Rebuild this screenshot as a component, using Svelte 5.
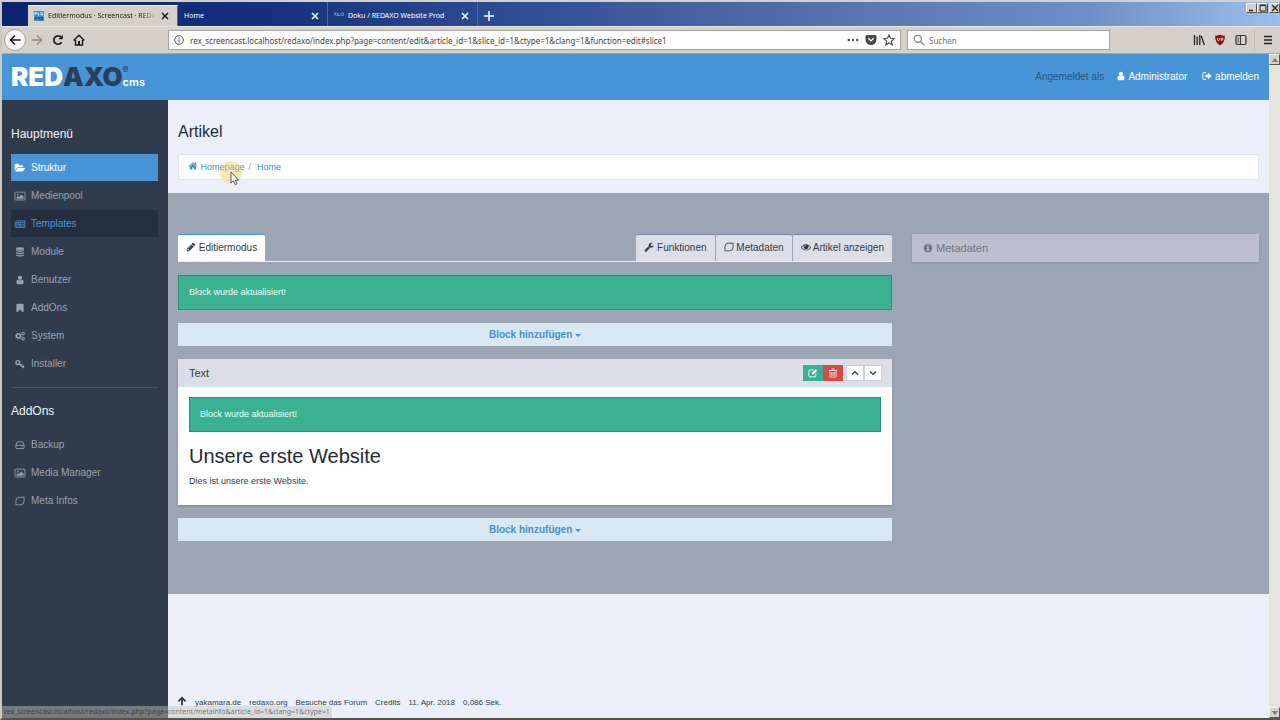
<script lang="ts">
  type MenuItem = {
    label: string;
    icon: string;
    state?: string;
  };

  const mainMenu: MenuItem[] = [
    { label: 'Struktur', icon: 'folder', state: 'active' },
    { label: 'Medienpool', icon: 'image' },
    { label: 'Templates', icon: 'newspaper', state: 'hovered' },
    { label: 'Module', icon: 'database' },
    { label: 'Benutzer', icon: 'user' },
    { label: 'AddOns', icon: 'bookmark' },
    { label: 'System', icon: 'cogs' },
    { label: 'Installer', icon: 'key' }
  ];

  const addonMenu: MenuItem[] = [
    { label: 'Backup', icon: 'hdd' },
    { label: 'Media Manager', icon: 'image' },
    { label: 'Meta Infos', icon: 'leaf' }
  ];

  const functionTabs: MenuItem[] = [
    { label: 'Funktionen', icon: 'wrench' },
    { label: 'Metadaten', icon: 'leaf' },
    { label: 'Artikel anzeigen', icon: 'eye' }
  ];

  const footerLinks = ['yakamara.de', 'redaxo.org', 'Besuche das Forum', 'Credits'];

  // Filled glyphs on a 1792 unit grid
  const glyphs: Record<string, string> = {
    folder: 'M1815 952q0 31-31 66l-336 396q-43 51-120.5 86.5t-143.5 35.5h-1088q-34 0-60.5-13t-26.5-43q0-31 31-66l336-396q43-51 120.5-86.5t143.5-35.5h1088q34 0 60.5 13t26.5 43zm-343-344v160h-832q-94 0-197 47.5t-164 119.5l-337 396-5 6q0-4-.5-12.5t-.5-12.5v-960q0-92 66-158t158-66h320q92 0 158 66t66 158v32h544q92 0 158 66t66 158z',
    home: 'M1472 992v480q0 26-19 45t-45 19h-384v-384h-256v384h-384q-26 0-45-19t-19-45v-480q0-1 .5-3t.5-3l575-474 575 474q1 2 1 6zm223-69l-62 74q-8 9-21 11h-3q-13 0-21-7l-692-577-692 577q-12 8-24 7-13-2-21-11l-62-74q-8-10-7-23.5t11-21.5l719-599q32-26 76-26t76 26l244 204v-195q0-14 9-23t23-9h192q14 0 23 9t9 23v408l219 182q10 8 11 21.5t-7 23.5z',
    user: 'M1536 1399q0 109-62.5 187t-150.5 78h-854q-88 0-150.5-78t-62.5-187q0-85 8.5-160.5t31.5-152 58.5-131 94-89 134.5-34.5q131 128 313 128t313-128q76 0 134.5 34.5t94 89 58.5 131 31.5 152 8.5 160.5zm-256-887q0 159-112.5 271.5t-271.5 112.5-271.5-112.5-112.5-271.5 112.5-271.5 271.5-112.5 271.5 112.5 112.5 271.5z',
    bookmark: 'M1420 128q23 0 44 9 33 13 52.5 41t19.5 62v1289q0 34-19.5 62t-52.5 41q-19 8-44 8-48 0-83-32l-441-424-441 424q-36 33-83 33-23 0-44-9-33-13-52.5-41t-19.5-62v-1289q0-34 19.5-62t52.5-41q21-9 44-9h1048z',
    pencil: 'M491 1536l91-91-235-235-91 91v107h128v128h107zm523-928q0-22-22-22-10 0-17 7l-542 542q-7 7-7 17 0 22 22 22 10 0 17-7l542-542q7-7 7-17zm-54-192l416 416-832 832h-416v-416zm683 96q0 53-37 90l-166 166-416-416 166-165q36-38 90-38 53 0 91 38l235 234q37 39 37 91z',
    info: 'M1152 1376v-160q0-14-9-23t-23-9h-96v-512q0-14-9-23t-23-9h-320q-14 0-23 9t-9 23v160q0 14 9 23t23 9h96v320h-96q-14 0-23 9t-9 23v160q0 14 9 23t23 9h448q14 0 23-9t9-23zm-128-896v-160q0-14-9-23t-23-9h-192q-14 0-23 9t-9 23v160q0 14 9 23t23 9h192q14 0 23-9t9-23zm640 416q0 209-103 385.5t-279.5 279.5-385.5 103-385.5-103-279.5-279.5-103-385.5 103-385.5 279.5-279.5 385.5-103 385.5 103 279.5 279.5 103 385.5z',
    eye: 'M1664 960q-152-236-381-353 61 104 61 225 0 185-131.5 316.5t-316.5 131.5-316.5-131.5-131.5-316.5q0-121 61-225-229 117-381 353 133 205 333.5 326.5t434.5 121.5 434.5-121.5 333.5-326.5zm-720-384q0-20-14-34t-34-14q-125 0-214.5 89.5t-89.5 214.5q0 20 14 34t34 14 34-14 14-34q0-86 61-147t147-61q20 0 34-14t14-34zm848 384q0 34-20 69-140 230-376.5 368.5t-499.5 138.5-499.5-139-376.5-368q-20-35-20-69t20-69q140-229 376.5-368t499.5-139 499.5 139 376.5 368q20 35 20 69z',
    wrench: 'M448 1472q0-26-19-45t-45-19-45 19-19 45 19 45 45 19 45-19 19-45zm644-420l-682 682q-37 37-90 37-52 0-91-37l-106-108q-38-36-38-90 0-53 38-91l681-681q39 98 114.5 173.5t173.5 114.5zm634-435q0 39-23 106-47 134-164.5 217.5t-258.5 83.5q-185 0-316.5-131.5t-131.5-316.5 131.5-316.5 316.5-131.5q58 0 121.5 16.5t107.5 46.5q16 11 16 28t-16 28l-293 169v224l193 107q5-3 79-48.5t135.5-81 70.5-35.5q15 0 23.5 10t8.5 25z'
  };

  let address = 'rex_screencast.localhost/redaxo/index.php?page=content/edit&article_id=1&slice_id=1&ctype=1&clang=1&function=edit#slice1';
  let search = '';
</script>

{#snippet icon(name: string)}
  {#if glyphs[name]}
    <svg class="icon" viewBox="0 0 1792 1792" aria-hidden="true"><path fill="currentColor" d={glyphs[name]} /></svg>
  {:else}
    <svg class="icon" viewBox="0 0 14 14" fill="none" stroke="currentColor" stroke-width="1.2" aria-hidden="true">
      {#if name === 'image'}
        <rect x="0" y="1.6" width="14" height="11" rx="1" />
        <circle cx="3.8" cy="5" r="1.3" fill="currentColor" stroke="none" />
        <path d="M2 11V9l2-2 1.500 1.500L9 5l3 3v3z" fill="currentColor" stroke="none" />
      {:else if name === 'newspaper'}
        <path d="M2.600 2.600h11v9.200H1.400Q.4 11.800.4 10.600V4h2.200v6.500q0 1.300-1.100 1.300" />
        <path d="M4.600 4.800h3.600v3H4.600z" />
        <path d="M9.500 5h2.800M9.500 7.500h2.800M4.200 9.800h8.100" />
      {:else if name === 'database'}
        <g fill="currentColor" stroke="none">
          <ellipse cx="7" cy="2.200" rx="5.600" ry="2" />
          <path d="M1.400 3.600q5.600 2.400 11.200 0v1.800q-5.600 3-11.200 0zM1.400 7q5.600 2.400 11.200 0v1.800q-5.600 3-11.200 0zM1.400 10.400q5.600 2.400 11.200 0V12q-5.600 3-11.200 0z" />
        </g>
      {:else if name === 'cogs'}
        <circle cx="4.800" cy="7" r="2.700" stroke-width="2" />
        <circle cx="4.800" cy="7" r="4" stroke-dasharray="1.600 1.540" stroke-width="1.500" />
        <circle cx="11.500" cy="3.500" r="1.500" stroke-width="1.400" />
        <circle cx="11.500" cy="3.500" r="2.300" stroke-dasharray="1 .8" />
        <circle cx="11.500" cy="10.700" r="1.500" stroke-width="1.400" />
        <circle cx="11.500" cy="10.700" r="2.300" stroke-dasharray="1 .8" />
      {:else if name === 'key'}
        <circle cx="4" cy="5" r="2.700" stroke-width="2" />
        <path d="M6 7l6.500 5.500M8.500 9.200l1.700-2M11 11.200l1.700-2" stroke-width="1.800" />
      {:else if name === 'hdd'}
        <path d="M1.200 7.500L3 3q.2-.6 1-.6h6q.8 0 1 .6l1.800 4.500v3.600q0 .8-.8.8H2q-.8 0-.8-.8zM1.200 7.500h11.600" />
        <path d="M8 9.700h1.200M10.300 9.700h1.200" />
      {:else if name === 'leaf'}
        <path d="M1.300 12.300V6.800Q1.300 1.700 6.200 1.700h6.500v5.500q0 5.100-5 5.100z" />
      {:else if name === 'edit'}
        <path d="M11 8v3q0 1.300-1.300 1.300H2.600Q1.300 12.300 1.300 11V4q0-1.300 1.300-1.300H8" />
        <path d="M5.500 9l.3-2.300 5-5 2 2-5 5z" fill="currentColor" stroke="none" />
      {:else if name === 'trash'}
        <path d="M1.500 3.500h11M5 3l.6-1.700h2.800L9 3M2.800 3.800v8q0 1 1 1h6.400q1 0 1-1v-8M5.200 5.800v5M7 5.800v5M8.800 5.800v5" />
      {:else if name === 'up'}
        <path d="M3 9l4-4 4 4" stroke-width="1.800" />
      {:else if name === 'down'}
        <path d="M3 5l4 4 4-4" stroke-width="1.800" />
      {:else if name === 'signout'}
        <path d="M5.500 2.200H2.800q-1.600 0-1.600 1.600v6.400q0 1.600 1.600 1.600h2.700" stroke-width="1.400" />
        <path d="M4.500 5.200h3.700V2.200L13.500 7l-5.300 4.800v-3H4.500z" fill="currentColor" stroke="none" />
      {:else if name === 'arrowup'}
        <path d="M7 13V3M2 7.500l5-5 5 5" stroke-width="2.600" />
      {/if}
    </svg>
  {/if}
{/snippet}

{#snippet menu(items: MenuItem[])}
  <ul class="menu">
    {#each items as item}
      <li>
        <a href="#{item.label}" class="menu-link {item.state ?? ''}">{@render icon(item.icon)}{item.label}</a>
      </li>
    {/each}
  </ul>
{/snippet}

{#snippet closeIcon()}
  <svg width="8" height="8" viewBox="0 0 8 8" stroke="currentColor" stroke-width="1.500"><path d="M1 1l6 6M7 1L1 7" /></svg>
{/snippet}

<div class="window">
  <div class="titlebar">
    <div class="tab current">
      <svg class="favicon" width="10" height="10" viewBox="0 0 10 10">
        <rect width="10" height="10" fill="#3d8fce" />
        <path d="M1 4V1.500h1.500v1H1M4 1.500v2.500h1.500M4 2.700h1M7 1.500v2.500h1.500V2z" stroke="#fff" stroke-width=".7" fill="none" />
        <path d="M1 8.500L2 6l1 2.500M4 6l2 2.500M6 6L4 8.500M7 6v2.500h1.500V6z" stroke="#23405f" stroke-width=".8" fill="none" />
      </svg>
      <span class="tab-title faded">Editiermodus · Screencast · REDAX</span>
      <button class="tab-close" aria-label="Tab schließen">{@render closeIcon()}</button>
    </div>
    <div class="tab">
      <span class="tab-title">Home</span>
      <button class="tab-close" aria-label="Tab schließen">{@render closeIcon()}</button>
    </div>
    <div class="tab">
      <svg class="favicon" width="10" height="10" viewBox="0 0 10 10">
        <path d="M0 4.500V2h2.500L0 3.500h1l2 1M3.500 2v2.500h2.500M3.500 3.200h2M7 2v2.500h2.500V2z" stroke="#4b9ad9" stroke-width=".9" fill="none" />
        <rect y="6" width="10" height="2" fill="#233a6b" />
      </svg>
      <span class="tab-title">Doku / REDAXO Website Prod</span>
      <button class="tab-close" aria-label="Tab schließen">{@render closeIcon()}</button>
    </div>
    <button class="new-tab" aria-label="Neuer Tab">
      <svg width="10" height="10" viewBox="0 0 10 10" stroke="#fff" stroke-width="1.500"><path d="M5 0v10M0 5h10" /></svg>
    </button>
    <div class="window-buttons">
      <button aria-label="Minimieren"><svg width="8" height="8" viewBox="0 0 8 8" stroke="#222" stroke-width="1.500"><path d="M1 6.500h4" /></svg></button>
      <button aria-label="Maximieren"><svg width="8" height="8" viewBox="0 0 8 8" fill="none" stroke="#222"><path d="M1 1.500h6v5.500H1zM1 1h6" /></svg></button>
      <button class="close" aria-label="Schließen"><svg width="8" height="8" viewBox="0 0 8 8" stroke="#222" stroke-width="1.300"><path d="M1 1l6 6M7 1L1 7" /></svg></button>
    </div>
  </div>

  <div class="toolbar">
    <button class="tool back" aria-label="Zurück">
      <svg width="12" height="12" viewBox="0 0 12 12" fill="none" stroke="#1c1c1c" stroke-width="1.600"><path d="M11.500 6H1.500M6 1.500L1.500 6 6 10.500" /></svg>
    </button>
    <button class="tool" aria-label="Vor">
      <svg width="12" height="12" viewBox="0 0 12 12" fill="none" stroke="#8d8b85" stroke-width="1.400"><path d="M.5 6h10M6 1.500L10.500 6 6 10.500" /></svg>
    </button>
    <button class="tool" aria-label="Neu laden">
      <svg width="12" height="12" viewBox="0 0 12 12" fill="none" stroke="#1c1c1c" stroke-width="1.700"><path d="M9.600 8.200A4.200 4.200 0 1 1 9.200 3.300" /><path d="M10.800.8v4.500H6.300z" fill="#1c1c1c" stroke="none" /></svg>
    </button>
    <button class="tool" aria-label="Startseite">
      <svg width="12" height="12" viewBox="0 0 12 12" fill="none" stroke="#1c1c1c" stroke-width="1.500"><path d="M.6 6.500L6 1.300l5.400 5.200M2.500 6v5h7V6" /><path d="M5 7h2v4H5z" fill="#1c1c1c" stroke="none" /></svg>
    </button>
    <div class="address">
      <svg width="10" height="10" viewBox="0 0 10 10" fill="none" stroke="#555"><circle cx="5" cy="5" r="4.300" /><path d="M5 4.300v3.200M5 2.400v1.100" /></svg>
      <input type="text" aria-label="Adresse" bind:value={address} />
      <svg width="12" height="12" viewBox="0 0 12 12" fill="#4a4a4a"><circle cx="1.800" cy="6" r="1.200" /><circle cx="6" cy="6" r="1.200" /><circle cx="10.200" cy="6" r="1.200" /></svg>
      <svg width="12" height="12" viewBox="0 0 12 12"><path d="M1.500 1h9q1 0 1 1v3.500a5.500 5.500 0 0 1-11 0V2q0-1 1-1z" fill="#4a4a4a" /><path d="M3.300 4.300L6 6.900l2.700-2.600" fill="none" stroke="#fff" stroke-width="1.400" /></svg>
      <svg width="12" height="12" viewBox="0 0 12 12" fill="none" stroke="#4a4a4a" stroke-width="1.200"><path d="M6 1l1.500 3.300 3.600.4-2.700 2.400.8 3.600L6 8.900l-3.200 1.800.8-3.600L.9 4.700l3.600-.4z" /></svg>
    </div>
    <div class="search">
      <svg width="12" height="12" viewBox="0 0 12 12" fill="none" stroke="#777" stroke-width="1.100"><circle cx="4.800" cy="4.800" r="3.600" /><path d="M7.500 7.500l3.800 3.800" /></svg>
      <input type="text" aria-label="Suchen" placeholder="Suchen" bind:value={search} />
    </div>
    <div class="extras">
      <button class="tool" aria-label="Bibliothek">
        <svg width="12" height="12" viewBox="0 0 12 12" stroke="#222" stroke-width="1.300"><path d="M1.500 1v10M4.200 2.500V11M6.800 1v10M8.300 2l3 9" /></svg>
      </button>
      <button class="tool" aria-label="Werbeblocker">
        <svg width="12" height="12" viewBox="0 0 12 12"><path d="M6 .5q2 1.300 5 1.300 0 7-5 9.700Q1 8.800 1 1.800q3 0 5-1.300z" fill="#8c1118" /><path d="M3.500 4v1.500q0 1 1 1t1-1V4M7.300 4v2.400q1.700 0 1.700-1.200T7.300 4" fill="none" stroke="#fff" stroke-width=".8" /></svg>
      </button>
      <button class="tool" aria-label="Seitenleiste">
        <svg width="12" height="12" viewBox="0 0 12 12" fill="none" stroke="#333" stroke-width="1.200"><rect x="1" y="1.500" width="10" height="9" rx="1.500" /><path d="M5.500 1.500v9M2.300 4h2M2.300 6h2M2.300 8h2" stroke-width=".9" /></svg>
      </button>
      <button class="tool burger" aria-label="Menü">
        <svg width="10" height="10" viewBox="0 0 10 10" stroke="#222" stroke-width="1.300"><path d="M1 1.500h8M1 5h8M1 8.500h8" /></svg>
      </button>
    </div>
  </div>

  <div class="viewport">
    <div class="page">
      <header class="header">
        <a class="logo" href="#start"><span class="red">RED</span><span class="axo">AXO</span><span class="suffix"><span class="reg">®</span><span class="cms">cms</span></span></a>
        <div class="account">
          <span class="signed-in">Angemeldet als</span>
          <a href="#profile">{@render icon('user')} Administrator</a>
          <a href="#logout">{@render icon('signout')} abmelden</a>
        </div>
      </header>

      <div class="body">
        <nav class="sidebar">
          <h4>Hauptmenü</h4>
          {@render menu(mainMenu)}
          <hr />
          <h4>AddOns</h4>
          {@render menu(addonMenu)}
        </nav>

        <main class="main">
          <h1>Artikel</h1>
          <ol class="breadcrumb">
            <li>
              <a href="#homepage">{@render icon('home')} Homepage</a>
              <span class="pointer">
                <svg width="24" height="24" viewBox="0 0 24 24">
                  <circle cx="12" cy="11" r="11" fill="#f5cf5a" opacity=".45" />
                  <path d="M12 11v11l2.500-2.300 1.800 4 1.700-.8-1.800-3.800h3.300z" fill="#fff" stroke="#333" stroke-width=".8" />
                </svg>
              </span>
            </li>
            <li><a href="#home">Home</a></li>
          </ol>

          <section class="editor">
            <div class="column">
              <div class="nav-tabs">
                <a href="#edit" class="nav-tab selected">{@render icon('pencil')} Editiermodus</a>
                <div class="nav-right">
                  {#each functionTabs as tab}
                    <a href="#{tab.label}" class="nav-tab">{@render icon(tab.icon)} {tab.label}</a>
                  {/each}
                </div>
              </div>
              <div class="alert">Block wurde aktualisiert!</div>
              <button class="add-block">Block hinzufügen <span class="caret"></span></button>
              <article class="panel">
                <div class="panel-heading">
                  <span>Text</span>
                  <div class="actions">
                    <div class="group">
                      <button class="edit" aria-label="Editieren">{@render icon('edit')}</button>
                      <button class="delete" aria-label="Löschen">{@render icon('trash')}</button>
                    </div>
                    <div class="group">
                      <button class="move" aria-label="Nach oben">{@render icon('up')}</button>
                      <button class="move" aria-label="Nach unten">{@render icon('down')}</button>
                    </div>
                  </div>
                </div>
                <div class="panel-body">
                  <div class="alert">Block wurde aktualisiert!</div>
                  <h2>Unsere erste Website</h2>
                  <p>Dies ist unsere erste Website.</p>
                </div>
              </article>
              <button class="add-block">Block hinzufügen <span class="caret"></span></button>
            </div>
            <aside class="column">
              <button class="meta">{@render icon('info')} Metadaten</button>
            </aside>
          </section>

          <footer class="footer">
            <a href="#top" aria-label="Nach oben">{@render icon('arrowup')}</a>
            {#each footerLinks as link}
              <a href="#{link}">{link}</a>
            {/each}
            <span>11. Apr. 2018</span>
            <span>0,086 Sek.</span>
          </footer>
        </main>
      </div>
    </div>

    <div class="scrollbar">
      <button aria-label="Hoch scrollen"><svg width="6" height="4" viewBox="0 0 6 4"><path d="M0 4l3-4 3 4z" fill="#777" /></svg></button>
      <button aria-label="Runter scrollen"><svg width="6" height="4" viewBox="0 0 6 4"><path d="M0 0l3 4 3-4z" fill="#777" /></svg></button>
    </div>
    <div class="status">rex_screencast.localhost/redaxo/index.php?page=content/metainfo&amp;article_id=1&amp;clang=1&amp;ctype=1</div>
  </div>
</div>

<style>
  :global(body) {
    margin: 0;
  }

  .window {
    box-sizing: border-box;
    display: flex;
    flex-direction: column;
    min-height: 100vh;
    border-top: 2px solid #d4d1ca;
    border-left: 2px solid #cbcac2;
    border-bottom: 2px solid #55554d;
    background: #d5d1c9;
    color: #303c4e;
    font-family: "Liberation Sans", Arial, sans-serif;
    font-size: 10px;
    line-height: 14px;
  }

  .window :global(*) {
    box-sizing: border-box;
  }

  button,
  input {
    margin: 0;
    padding: 0;
    border: 0;
    background: none;
    color: inherit;
    font: inherit;
  }

  a {
    color: inherit;
    text-decoration: none;
  }

  ul,
  ol {
    margin: 0;
    padding: 0;
    list-style: none;
  }

  svg {
    flex: none;
  }

  .icon {
    width: 10px;
    height: 10px;
    vertical-align: -1px;
    overflow: visible;
  }

  /* Browser chrome */
  .titlebar {
    display: flex;
    height: 24px;
    padding-left: 26px;
    background: linear-gradient(90deg, #0d2470 0%, #14307e 20%, #2c4a92 38%, #5673ad 65%, #6d8fc8 85%, #9abfec 100%);
    color: #fff;
    font-family: "Noto Sans", Tahoma, sans-serif;
    font-size: 7px;
  }

  .tab {
    display: flex;
    align-items: center;
    gap: 4px;
    width: 150px;
    padding: 4px 8px 0 6px;
    border-right: 1px solid #5068a0;
  }

  .tab.current {
    margin-top: 3px;
    padding-top: 0;
    border-top: 1px solid #f4f2ee;
    background: #d5d1c9;
    color: #222;
  }

  .tab-title {
    flex: 1;
    min-width: 0;
    white-space: nowrap;
  }

  .tab-title.faded {
    mask-image: linear-gradient(90deg, #000 85%, transparent);
  }

  .tab-close {
    display: flex;
  }

  .new-tab {
    display: flex;
    align-items: center;
    padding: 4px 6px 0;
  }

  .window-buttons {
    display: flex;
    margin: 1px 0 0 auto;
  }

  .window-buttons button {
    display: flex;
    align-items: center;
    justify-content: center;
    width: 11px;
    height: 10px;
    border: 1px solid #f2f0ea;
    border-right-color: #555;
    border-bottom-color: #555;
    background: #d5d1c9;
  }

  .window-buttons .close {
    margin-left: 1px;
  }

  .toolbar {
    display: flex;
    align-items: center;
    height: 28px;
    padding-left: 2px;
    border-top: 1px solid #e6e3dc;
    border-bottom: 1px solid #a9a69f;
    color: #444;
    font-family: "Noto Sans", Tahoma, sans-serif;
    font-size: 8px;
  }

  .tool {
    display: flex;
    align-items: center;
    justify-content: center;
    width: 21px;
    height: 22px;
  }

  .tool.back {
    width: 22px;
    border: 1px solid #a5a39e;
    border-radius: 50%;
    background: #f8f7f4;
  }

  .address,
  .search {
    display: flex;
    align-items: center;
    height: 20px;
    padding: 0 5px;
    border: 1px solid #a5a39e;
    background: #fdfdfd;
  }

  .address {
    flex: 1;
    gap: 6px;
    margin-left: 79px;
  }

  .search {
    gap: 4px;
    width: 203px;
    margin-left: 6px;
  }

  .address input,
  .search input {
    flex: 1;
    min-width: 0;
    height: 16px;
    outline: none;
  }

  .extras {
    display: flex;
    align-items: center;
    width: 170px;
    padding-left: 78px;
  }

  .tool.burger {
    margin-left: auto;
    border-left: 1px solid #c3c0b8;
    width: 26px;
  }

  .viewport {
    position: relative;
    display: flex;
    flex: 1;
  }

  .page {
    display: flex;
    flex: 1;
    flex-direction: column;
  }

  .scrollbar {
    display: flex;
    flex-direction: column;
    justify-content: space-between;
    width: 11px;
    background: #e5e3de;
  }

  .scrollbar button {
    display: flex;
    align-items: center;
    justify-content: center;
    height: 11px;
    border: 1px solid #f2f0ea;
    border-right-color: #555;
    border-bottom-color: #555;
    background: #d5d1c9;
  }

  .status {
    position: absolute;
    bottom: 0;
    left: 0;
    padding: 0 2px;
    background: rgba(200, 198, 194, 0.45);
    color: rgba(0, 0, 0, 0.5);
    font-family: "Noto Sans", Tahoma, sans-serif;
    font-size: 7px;
    line-height: 12px;
  }

  /* Backend header */
  .header {
    display: flex;
    align-items: center;
    justify-content: space-between;
    height: 46px;
    padding: 0 10px 0 9px;
    background: #4795d6;
    color: #fff;
  }

  .logo {
    display: flex;
    align-items: center;
    font-family: Inter, sans-serif;
    font-size: 26px;
    font-weight: 900;
    line-height: 28px;
  }

  .axo {
    color: #2a3f5a;
  }

  .suffix {
    display: flex;
    flex-direction: column;
    font-size: 11px;
    font-weight: 600;
    line-height: 14px;
  }

  .reg {
    color: #2a3f5a;
    font-size: 9px;
    line-height: 10px;
  }

  .account {
    display: flex;
    gap: 12px;
  }

  .account a + a {
    margin-left: 3px;
  }

  .signed-in {
    color: #2f5478;
  }

  .body {
    display: flex;
    flex: 1;
  }

  /* Sidebar */
  .sidebar {
    width: 166px;
    padding: 26px 10px 0 9px;
    background: #303c4e;
    color: #98a2b0;
  }

  .sidebar h4 {
    margin: 0 0 12px;
    color: #f0f3f7;
    font-size: 12px;
    font-weight: 400;
    line-height: 16px;
  }

  .menu {
    display: flex;
    flex-direction: column;
    gap: 1px;
  }

  .menu-link {
    display: flex;
    align-items: center;
    gap: 6px;
    height: 27px;
    padding: 0 4px;
  }

  .menu-link.active {
    background: #4795d6;
    color: #fff;
  }

  .menu-link.hovered {
    background: #232f3f;
    color: #4d97d4;
  }

  .sidebar hr {
    height: 1px;
    margin: 10px 0 15px;
    border: 0;
    background: #465366;
  }

  /* Content */
  .main {
    display: flex;
    flex: 1;
    flex-direction: column;
    background: #eceffa;
  }

  h1 {
    margin: 22px 10px 12px;
    color: #1f2a38;
    font-size: 16px;
    font-weight: 400;
    line-height: 20px;
  }

  .breadcrumb {
    display: flex;
    margin: 0 10px 13px;
    padding: 5px 9px;
    border: 1px solid #dfe3ec;
    background: #fdfdfd;
    color: #4590cb;
    font-size: 9px;
  }

  .breadcrumb li {
    position: relative;
  }

  .breadcrumb li + li::before {
    content: "/";
    padding: 0 6px 0 4px;
    color: #999;
  }

  .pointer {
    position: absolute;
    top: 1px;
    right: 2px;
    line-height: 0;
  }

  .editor {
    display: grid;
    grid-template-columns: 2fr 1fr;
    padding: 41px 0 53px;
    background: #9ba5b3;
  }

  .column {
    display: flex;
    flex-direction: column;
    gap: 13px;
    padding: 0 10px;
  }

  .nav-tabs,
  .nav-right {
    display: flex;
    justify-content: space-between;
  }

  .nav-tabs {
    border-bottom: 1px solid #eceffa;
  }

  .nav-right {
    gap: 1px;
  }

  .nav-tab {
    height: 27px;
    padding: 6px 8px;
    border-top: 1px solid #74859d;
    border-radius: 2px 2px 0 0;
    background: #dcdfe8;
  }

  .nav-tab.selected {
    border-top-color: #4795d6;
    background: #fdfdfd;
  }

  .alert {
    padding: 10px;
    border: 1px solid #2d8f77;
    background: #3bb194;
    color: #f0fbf8;
    font-size: 9px;
    line-height: 13px;
  }

  .add-block {
    height: 23px;
    background: #d7e8f2;
    color: #4590cb;
    font-weight: 700;
  }

  .caret {
    display: inline-block;
    border: 3px solid transparent;
    border-top-color: currentColor;
    border-bottom: 0;
    vertical-align: 1px;
  }

  .panel {
    background: #fdfdfd;
    box-shadow: 0 1px 2px rgba(48, 60, 78, 0.3);
  }

  .panel-heading {
    display: flex;
    align-items: center;
    justify-content: space-between;
    height: 28px;
    padding: 0 10px 0 11px;
    background: #dcdee7;
    font-size: 11px;
  }

  .actions,
  .group {
    display: flex;
  }

  .actions {
    gap: 3px;
  }

  .group button {
    width: 20px;
    height: 16px;
    line-height: 12px;
  }

  .group .edit {
    background: #3bb194;
    color: #fff;
  }

  .group .delete {
    background: #d44a47;
    color: #fbe3dc;
  }

  .group .move {
    width: 18px;
    border: 1px solid #ccd0da;
    background: #fdfdfd;
  }

  .panel-body {
    padding: 10px 11px 17px;
  }

  h2 {
    margin: 12px 0 6px;
    color: #1f2a38;
    font-size: 20px;
    font-weight: 400;
    line-height: 24px;
  }

  p {
    margin: 0;
    font-size: 9px;
    line-height: 14px;
  }

  .meta {
    height: 28px;
    padding: 0 11px;
    background: #bbc0cc;
    box-shadow: 0 1px 2px rgba(48, 60, 78, 0.2);
    color: #6d7686;
    font-size: 11px;
    text-align: left;
  }

  .footer {
    display: flex;
    gap: 8px;
    margin-top: auto;
    padding: 0 9px 8px;
    font-size: 8px;
  }
</style>
